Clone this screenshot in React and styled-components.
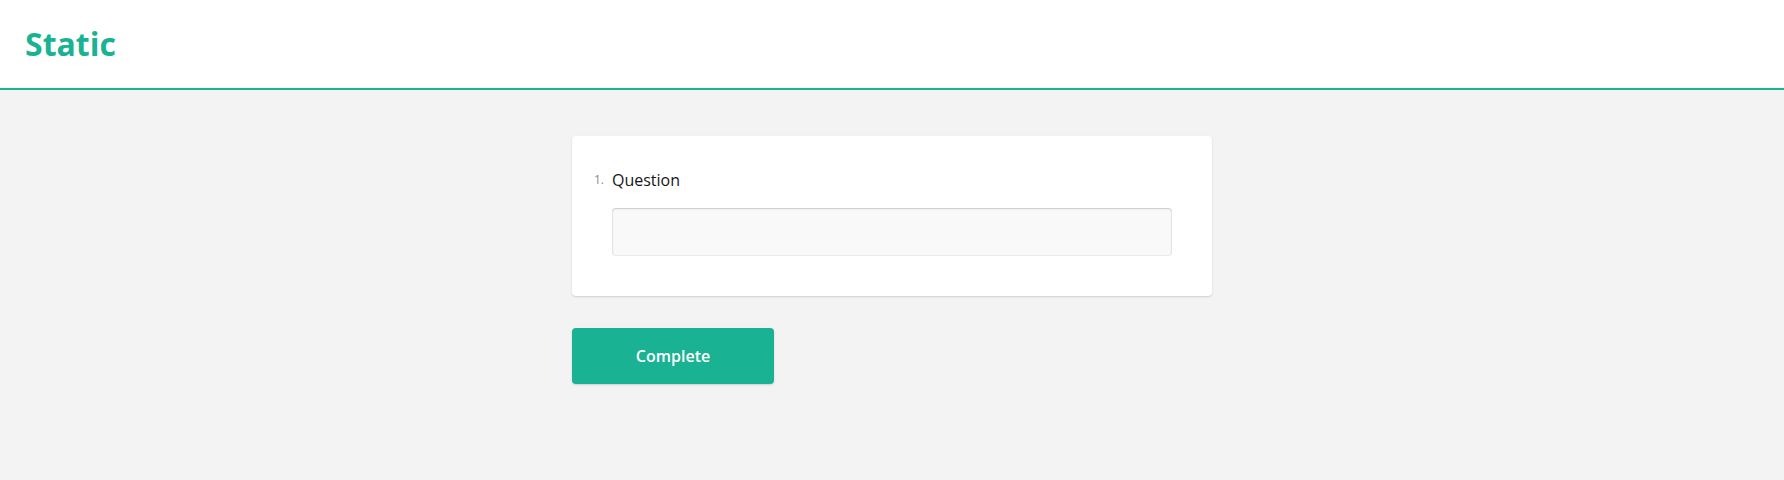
import React from "react";
import styled, { createGlobalStyle } from "styled-components";

const GlobalStyle = createGlobalStyle`
  html, body {
    margin: 0;
    padding: 0;
    background: #f3f3f3;
    font-family: "Open Sans", "Liberation Sans", sans-serif;
  }
  #root {
    min-height: 480px;
    background: #f3f3f3;
  }
`;

const Header = styled.header`
  background: #ffffff;
  border-bottom: 2px solid #19b394;
  padding: 24px 25px;
`;

const Title = styled.h1`
  margin: 0;
  font-size: 32px;
  line-height: 40px;
  font-weight: 700;
  color: #19b394;
`;

const Body = styled.main`
  width: 640px;
  margin: 0 auto;
  padding-top: 46px;
  display: flex;
  flex-direction: column;
  align-items: flex-start;
  gap: 32px;
`;

const Card = styled.div`
  box-sizing: border-box;
  width: 100%;
  background: #ffffff;
  border-radius: 4px;
  box-shadow: 0 1px 2px rgba(0, 0, 0, 0.15);
  padding: 32px 40px 40px 40px;
`;

const QuestionTitle = styled.div`
  display: flex;
  align-items: flex-start;
  margin-bottom: 16px;
`;

const Num = styled.span`
  box-sizing: border-box;
  width: 40px;
  margin-left: -40px;
  margin-top: 4px;
  padding-right: 8px;
  text-align: right;
  font-size: 12px;
  line-height: 16px;
  color: #8c8c8c;
`;

const Label = styled.span`
  font-size: 16px;
  line-height: 24px;
  color: #161616;
`;

const Input = styled.input`
  box-sizing: border-box;
  display: block;
  width: 100%;
  height: 48px;
  border: none;
  outline: none;
  border-radius: 4px;
  background: #f9f9f9;
  box-shadow: inset 0 0 0 1px rgba(0, 0, 0, 0.05),
    inset 0 1px 2px rgba(0, 0, 0, 0.15);
  padding: 12px 16px;
  font-family: inherit;
  font-size: 16px;
`;

const Button = styled.button`
  width: 202px;
  height: 56px;
  border: none;
  border-radius: 4px;
  background: #19b394;
  box-shadow: 0 1px 2px rgba(0, 0, 0, 0.15);
  color: #ffffff;
  font-family: inherit;
  font-size: 16px;
  font-weight: 600;
  line-height: 24px;
  cursor: pointer;
`;

export default function App() {
  return (
    <>
      <GlobalStyle />
      <Header>
        <Title>Static</Title>
      </Header>
      <Body>
        <Card>
          <QuestionTitle>
            <Num>1.</Num>
            <Label>Question</Label>
          </QuestionTitle>
          <Input type="text" />
        </Card>
        <Button>Complete</Button>
      </Body>
    </>
  );
}
